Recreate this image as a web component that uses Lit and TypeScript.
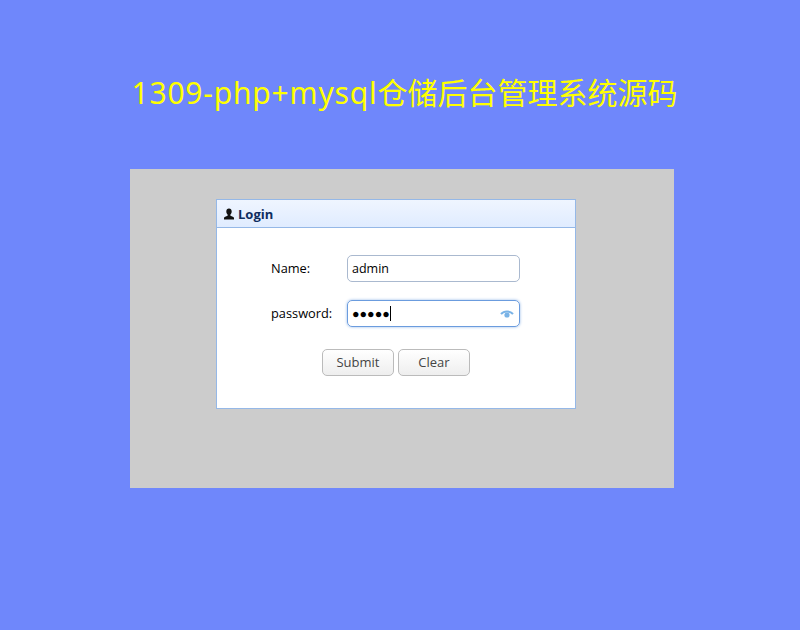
import { LitElement, html, css } from "lit";
import { customElement } from "lit/decorators.js";

@customElement("app-root")
export class AppRoot extends LitElement {
  static styles = css`
    :host { display: block; width: 800px; height: 630px; background: #6f87fb; font-family: "Open Sans", "Liberation Sans", sans-serif; overflow: hidden; }
    .page { display: flex; flex-direction: column; align-items: center; }
    h1 { margin: 0; padding-top: 73px; height: 96px; box-sizing: content-box; font: 400 30px/40px "Noto Sans", "Noto Sans CJK SC", sans-serif; color: #ffff00; width: 800px; text-align: center; white-space: nowrap; text-indent: 9px; }
    .latin { letter-spacing: 0.8px; }
    .stage { margin-left: 4px; width: 544px; height: 319px; background: #cccccc; box-sizing: border-box; padding: 30px 0 0 86px; }
    .panel { width: 360px; height: 210px; box-sizing: border-box; border: 1px solid #95b8e7; background: #fff; display: flex; flex-direction: column; }
    .head { height: 27px; box-sizing: content-box; border-bottom: 1px solid #95b8e7; background: linear-gradient(#eff5ff, #e0ecff); display: flex; align-items: center; gap: 3px; padding-left: 6px; font: 700 13px "Open Sans", sans-serif; color: #0e2d5f; }
    .head svg { width: 12px; height: 12px; }
    .body { padding: 27px 0 0 54px; display: flex; flex-direction: column; }
    .row { display: flex; align-items: center; height: 27px; margin-bottom: 18px; font: 12.8px "Open Sans", sans-serif; color: #000; }
    .row label { width: 76px; padding-bottom: 1px; }
    .field { width: 173px; height: 27px; box-sizing: border-box; border: 1px solid #aab9cf; border-radius: 5px; display: flex; align-items: center; padding: 0 4px 1px; font: 12.5px "Open Sans", sans-serif; }
    .focus { border-color: #6b9cde; box-shadow: 0 0 3px 0 #95b8e7; padding-bottom: 0; }
    .dots { font: 12.5px "Liberation Sans", sans-serif; }
    .caret { width: 1px; height: 15px; background: #000; }
    .spacer { flex: 1; }
    .eye { width: 14px; height: 10px; margin-right: 1px; }
    .btns { display: flex; gap: 4px; margin-top: 4px; margin-left: 51px; }
    .btn { width: 72px; height: 27px; box-sizing: border-box; border: 1px solid #bbbbbb; border-radius: 5px; background: linear-gradient(#ffffff, #eeeeee); color: #444; font: 13px "Open Sans", sans-serif; display: flex; align-items: center; justify-content: center; padding: 0 0 2px; }
  `;

  render() {
    return html`<div class="page">
      <h1><span class="latin">1309-php+mysql</span>仓储后台管理系统源码</h1>
      <div class="stage">
        <div class="panel">
          <div class="head">
            <svg viewBox="0 0 12 12"><path d="M6 .5c1.700 0 2.700 1.300 2.700 3 0 1.200-.6 2.400-1.300 3v1.200c1.600.5 3.600 1.100 3.600 2.400V11.500H1v-1.400c0-1.300 2-1.900 3.600-2.400V6.500c-.7-.6-1.300-1.800-1.300-3 0-1.700 1-3 2.700-3z" fill="#111"/></svg>
            <span>Login</span>
          </div>
          <div class="body">
            <div class="row"><label>Name:</label><div class="field">admin</div></div>
            <div class="row"><label>password:</label><div class="field focus"><span class="dots">●●●●●</span><span class="caret"></span><span class="spacer"></span>
              <svg class="eye" viewBox="0 0 14 10"><path d="M1 5C4 1.500 10 1.500 13 5" fill="none" stroke="#7ab3e6" stroke-width="2"/><circle cx="7" cy="6" r="2.600" fill="#7ab3e6"/></svg>
            </div></div>
            <div class="btns"><button class="btn">Submit</button><button class="btn">Clear</button></div>
          </div>
        </div>
      </div>
    </div>`;
  }
}
